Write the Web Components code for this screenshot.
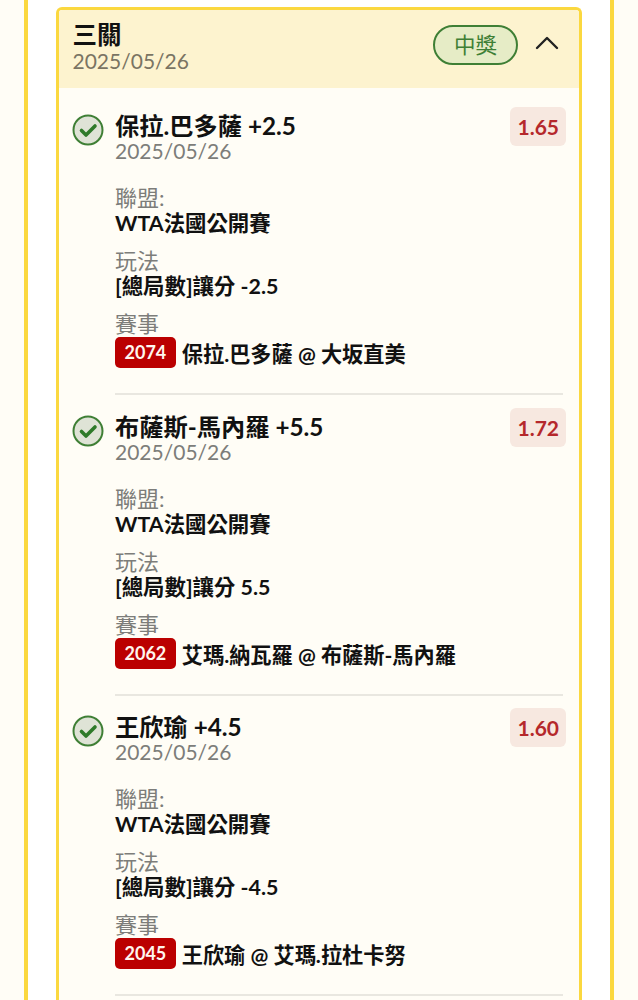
<!DOCTYPE html>
<html lang="zh-Hant">
<head>
<meta charset="utf-8">
<title>三關</title>
<style>
  html, body { margin: 0; background: #fffdf6; }
  body {
    height: 1000px;
    overflow: hidden;
    font-family: Lato, "Noto Sans CJK TC", sans-serif;
    color: #111;
  }
</style>
</head>
<body>
<bet-panel>
  <parlay-card title="三關" date="2025/05/26" status="中獎">
    <bet-leg name="保拉.巴多薩 +2.5" date="2025/05/26" odds="1.65" league="WTA法國公開賽" play="[總局數]讓分 -2.5" code="2074" match="保拉.巴多薩 @ 大坂直美"></bet-leg>
    <bet-leg name="布薩斯-馬內羅 +5.5" date="2025/05/26" odds="1.72" league="WTA法國公開賽" play="[總局數]讓分 5.5" code="2062" match="艾瑪.納瓦羅 @ 布薩斯-馬內羅"></bet-leg>
    <bet-leg name="王欣瑜 +4.5" date="2025/05/26" odds="1.60" league="WTA法國公開賽" play="[總局數]讓分 -4.5" code="2045" match="王欣瑜 @ 艾瑪.拉杜卡努"></bet-leg>
  </parlay-card>
</bet-panel>

<script>
const panelTmp = document.createElement('template');
panelTmp.innerHTML = `
  <style>
  :host {
      display: block;
      box-sizing: border-box;
      width: 590px;
      height: 1000px;
      overflow: hidden;
      margin-left: 24px;
      padding: 7px 28px 0;
      border-left: 4px solid #fbd83f;
      border-right: 4px solid #fbd83f;
      background: #fff;
  }
  </style>
  <slot></slot>
  `;

class BetPanel extends HTMLElement {
    connectedCallback() {
      if (!this.shadowRoot) {
        this.attachShadow({ mode: 'open' }).appendChild(panelTmp.content.cloneNode(true));
      }
    }
}

const cardTmp = document.createElement('template');
cardTmp.innerHTML = `
  <style>
  :host {
      display: block;
      min-height: 1010px;
      border: 3px solid #fbd83f;
      border-bottom: 0;
      border-radius: 6px 6px 0 0;
      background: #fffdf6;
      overflow: hidden;
  }
  .head {
      display: flex;
      align-items: center;
      height: 78px;
      padding: 0 20px 0 13.5px;
      background: #fdf3cf;
  }
  .titles { flex: 1; margin-top: -4px; }
  .title { font-size: 24.5px; font-weight: 700; line-height: 28px; color: #111; }
  .date { font-size: 21px; line-height: 24px; color: #7a7463; }
  .status {
      box-sizing: border-box;
      width: 85px;
      height: 40px;
      margin: -9px 17px 0 0;
      border: 2px solid #3f7f35;
      border-radius: 20px;
      background: #e6ecc6;
      color: #3f7f35;
      font-size: 21.5px;
      line-height: 36px;
      text-align: center;
  }
  svg { display: block; margin-top: -14px; }
  .legs { padding: 6px 16px 0 13px; }
  </style>
  <div class="head">
    <div class="titles">
      <div class="title"></div>
      <div class="date"></div>
    </div>
    <div class="status"></div>
    <svg width="24" height="16" viewBox="0 0 24 16" fill="none" stroke="#222" stroke-width="2.4" stroke-linecap="round" stroke-linejoin="round"><path d="M2 14 12 4 22 14"/></svg>
  </div>
  <div class="legs"><slot></slot></div>
  `;

class ParlayCard extends HTMLElement {
    connectedCallback() {
      if (!this.shadowRoot) {
        const root = this.attachShadow({ mode: 'open' });
        root.appendChild(cardTmp.content.cloneNode(true));
        root.querySelector('.title').textContent = this.getAttribute('title');
        root.querySelector('.date').textContent = this.getAttribute('date');
        root.querySelector('.status').textContent = this.getAttribute('status');
      }
    }
}

const legTmp = document.createElement('template');
legTmp.innerHTML = `
  <style>
  :host {
      display: grid;
      grid-template-columns: 43px 1fr;
      padding-top: 14px;
      height: 300.5px;
      box-sizing: border-box;
  }
  .check { margin-top: 6px; }
  .body { min-width: 0; border-bottom: 2px solid #e9e7e0; margin-bottom: -0.5px; }
  .top { display: flex; justify-content: space-between; align-items: flex-start; margin-right: -3px; }
  .name { font-size: 24.25px; font-weight: 700; line-height: 27px; color: #111; padding-top: 4px; }
  .date { font-size: 21px; line-height: 24px; color: #7d7d7a; margin-bottom: 22px; }
  .odds {
      margin-top: -1px;
      padding: 0 7px;
      height: 39px;
      line-height: 39px;
      border-radius: 6px;
      background: #f7e8e0;
      color: #b5282c;
      font-size: 21px;
      font-weight: 700;
  }
  .label { font-size: 22px; line-height: 25px; color: #7d7d7a; }
  .value { font-size: 21.4px; font-weight: 700; line-height: 26px; color: #111; margin-bottom: 12px; }
  .row { display: flex; align-items: center; gap: 6px; margin-top: 1px; font-size: 21.2px; font-weight: 700; color: #111; height: 31px; }
  .code {
      padding: 0 9.5px;
      height: 31px;
      line-height: 31px;
      border-radius: 5px;
      background: #bb0000;
      color: #fff6ee;
      font-size: 18px;
  }
  </style>
  <svg class="check" width="32" height="32" viewBox="0 0 32 32" fill="none">
    <circle cx="16" cy="16" r="14.5" fill="#dfe3d6" stroke="#3f7f35" stroke-width="2"/>
    <path d="M9.5 16.5 14 21 23 12" stroke="#2f7a2a" stroke-width="3.6" stroke-linecap="round" stroke-linejoin="round"/>
  </svg>
  <div class="body">
    <div class="top">
      <div>
        <div class="name"></div>
        <div class="date"></div>
      </div>
      <div class="odds"></div>
    </div>
    <div class="label">聯盟:</div>
    <div class="value league"></div>
    <div class="label">玩法</div>
    <div class="value play"></div>
    <div class="label">賽事</div>
    <div class="row"><span class="code"></span><span class="match"></span></div>
  </div>
  `;

class BetLeg extends HTMLElement {
    connectedCallback() {
      if (!this.shadowRoot) {
        const root = this.attachShadow({ mode: 'open' });
        root.appendChild(legTmp.content.cloneNode(true));
        root.querySelector('.name').textContent = this.getAttribute('name');
        root.querySelector('.date').textContent = this.getAttribute('date');
        root.querySelector('.odds').textContent = this.getAttribute('odds');
        root.querySelector('.league').textContent = this.getAttribute('league');
        root.querySelector('.play').textContent = this.getAttribute('play');
        root.querySelector('.code').textContent = this.getAttribute('code');
        root.querySelector('.match').textContent = this.getAttribute('match');
      }
    }
}

customElements.define('bet-panel', BetPanel);
customElements.define('parlay-card', ParlayCard);
customElements.define('bet-leg', BetLeg);
</script>
</body>
</html>
